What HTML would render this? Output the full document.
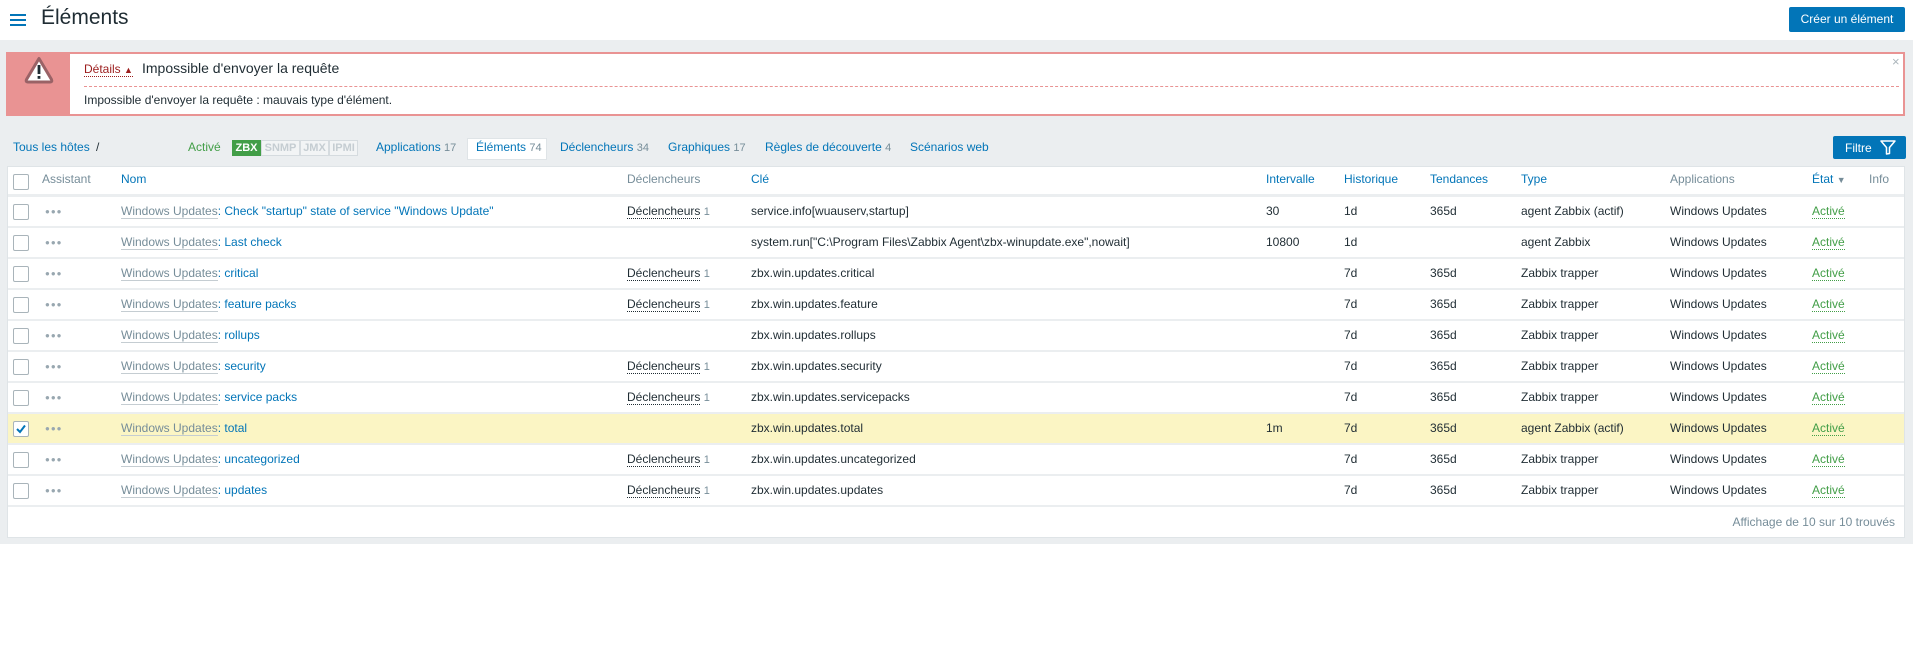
<!DOCTYPE html>
<html><head><meta charset="utf-8"><style>
*{box-sizing:border-box;margin:0;padding:0}
body{width:1913px;height:648px;background:#fff;font-family:"Liberation Sans",Arial,sans-serif;font-size:12px;color:#1f2c33;position:relative;overflow:hidden}
.abs{position:absolute;white-space:nowrap}
.hdr{position:absolute;left:0;top:0;width:1913px;height:40px;background:#fff}
.gray{position:absolute;left:0;top:40px;width:1913px;height:504px;background:#ebeef0}
.btn{position:absolute;background:#0275b8;color:#fff;border-radius:2px;text-align:center}
.lnk{color:#0275b8}
.msg{position:absolute;left:6px;top:52px;width:1899px;height:64px;background:#fff;border:2px solid #e99393}
.msg .red{position:absolute;left:0;top:0;width:62px;height:60px;background:#e99393}
.tbl{position:absolute;left:7px;top:166px;width:1898px;height:372px;background:#fff;border:1px solid #dfe4e7}
.row{position:absolute;left:0;width:1896px;height:31px;border-bottom:2px solid #ebeef0}
.row>span{position:absolute;top:7px;white-space:nowrap}
.cb{position:absolute;left:5px;top:7px;width:16px;height:16px;border:1px solid #a9b4ba;border-radius:2px;background:#fff}
.row>span.dots{color:#98a7b0;font-size:8px;letter-spacing:1px;top:10px}
.g{color:#768d99;border-bottom:1px solid #c5cdd2}
.dec{border-bottom:1px dotted #1f2c33}
.cnt{color:#768d99;font-size:11px}
.act{color:#429e47;border-bottom:1px dotted #429e47}
.th{color:#0275b8}
.tag{position:absolute;top:140px;height:16px;font-size:11px;font-weight:bold;line-height:14px;text-align:center;border:1px solid #d5dbdf;color:#c5cdd2;background:#f2f4f5}
</style></head><body>
<div class="hdr">
 <div class="abs" style="left:10px;top:14px;width:16px;height:2px;background:#0275b8;box-shadow:0 5px 0 #0275b8,0 10px 0 #0275b8"></div>
 <div class="abs" style="left:41px;top:6px;font-size:21px;color:#1f2c33">Éléments</div>
 <div class="btn" style="left:1789px;top:7px;width:116px;height:25px;line-height:25px;font-size:12px">Créer un élément</div>
</div>
<div class="gray"></div>
<div class="msg">
 <div class="red"><svg width="62" height="60" style="position:absolute;left:0;top:0"><path d="M31 4.5 L43.5 25.5 Q44.5 28 42 28 L20 28 Q17.5 28 18.5 25.5 Z" fill="#fff" stroke="#9a6266" stroke-width="3" stroke-linejoin="round"/><rect x="29.6" y="11" width="2.8" height="9" fill="#1f2c33"/><rect x="29.6" y="22" width="2.8" height="2.8" fill="#1f2c33"/></svg></div>
 <div class="abs" style="left:76px;top:8px;color:#9b1c1c;font-size:12px;border-bottom:1px dotted #9b1c1c">Détails <span style="font-size:9px">▲</span></div>
 <div class="abs" style="left:134px;top:6px;font-size:14px">Impossible d'envoyer la requête</div>
 <div class="abs" style="left:76px;top:32px;width:1815px;border-top:1px dashed #e99393"></div>
 <div class="abs" style="left:76px;top:39px;font-size:12px">Impossible d'envoyer la requête : mauvais type d'élément.</div>
 <div class="abs" style="left:1884px;top:0px;color:#acb6bc;font-size:13px">×</div>
</div>
<div class="abs lnk" style="left:13px;top:140px">Tous les hôtes</div>
<div class="abs" style="left:96px;top:140px">/</div>
<div class="abs" style="left:188px;top:140px;color:#429e47">Activé</div>
<div class="tag" style="left:232px;width:29px;background:#429e47;color:#fff;border-color:#429e47">ZBX</div>
<div class="tag" style="left:261px;width:39px">SNMP</div>
<div class="tag" style="left:300px;width:29px">JMX</div>
<div class="tag" style="left:329px;width:29px">IPMI</div>
<div class="abs lnk" style="left:376px;top:140px">Applications <span class="cnt">17</span></div>
<div class="abs" style="left:467px;top:138px;width:80px;height:22px;background:#fff;border:1px solid #dfe4e7"></div>
<div class="abs lnk" style="left:476px;top:140px">Éléments <span class="cnt">74</span></div>
<div class="abs lnk" style="left:560px;top:140px">Déclencheurs <span class="cnt">34</span></div>
<div class="abs lnk" style="left:668px;top:140px">Graphiques <span class="cnt">17</span></div>
<div class="abs lnk" style="left:765px;top:140px">Règles de découverte <span class="cnt">4</span></div>
<div class="abs lnk" style="left:910px;top:140px">Scénarios web</div>
<div class="btn" style="left:1833px;top:136px;width:73px;height:23px">
 <span class="abs" style="left:12px;top:5px;font-size:12px">Filtre</span>
 <svg class="abs" style="left:47px;top:4px" width="16" height="15"><path d="M1 1 H15 L9.5 7.5 V13.5 L6.5 14 V7.5 Z" fill="none" stroke="#fff" stroke-width="1.5" stroke-linejoin="round"/></svg>
</div>
<div class="tbl">
 <div class="row" style="top:0;height:30px;border-bottom:3px solid #ebeef0">
  <div class="cb"></div>
  <span style="left:34px;color:#768d99;top:5px">Assistant</span>
  <span class="th" style="left:113px;top:5px">Nom</span>
  <span style="left:619px;color:#768d99;top:5px">Déclencheurs</span>
  <span class="th" style="left:743px;top:5px">Clé</span>
  <span class="th" style="left:1258px;top:5px">Intervalle</span>
  <span class="th" style="left:1336px;top:5px">Historique</span>
  <span class="th" style="left:1422px;top:5px">Tendances</span>
  <span class="th" style="left:1513px;top:5px">Type</span>
  <span style="left:1662px;color:#768d99;top:5px">Applications</span>
  <span class="th" style="left:1804px;top:5px">État <span style="font-size:9px;color:#768d99">▼</span></span>
  <span style="left:1861px;color:#768d99;top:5px">Info</span>
 </div>
 <div id="rows"></div>
 <div class="abs" style="right:9px;top:348px;color:#768d99;font-size:12px">Affichage de 10 sur 10 trouvés</div>
</div>
<script>
var d=[["Check \"startup\" state of service \"Windows Update\"",1,"service.info[wuauserv,startup]","30","1d","365d","agent Zabbix (actif)"],
["Last check",0,"system.run[\"C:\\Program Files\\Zabbix Agent\\zbx-winupdate.exe\",nowait]","10800","1d","","agent Zabbix"],
["critical",1,"zbx.win.updates.critical","","7d","365d","Zabbix trapper"],
["feature packs",1,"zbx.win.updates.feature","","7d","365d","Zabbix trapper"],
["rollups",0,"zbx.win.updates.rollups","","7d","365d","Zabbix trapper"],
["security",1,"zbx.win.updates.security","","7d","365d","Zabbix trapper"],
["service packs",1,"zbx.win.updates.servicepacks","","7d","365d","Zabbix trapper"],
["total",0,"zbx.win.updates.total","1m","7d","365d","agent Zabbix (actif)"],
["uncategorized",1,"zbx.win.updates.uncategorized","","7d","365d","Zabbix trapper"],
["updates",1,"zbx.win.updates.updates","","7d","365d","Zabbix trapper"]];
var h="";
d.forEach(function(r,i){
 var sel=i==7;
 h+='<div class="row" style="top:'+(30+i*31)+'px;'+(sel?'background:#fbf5c4;':'')+'">'
 +'<div class="cb">'+(sel?'<svg width="14" height="14" style="position:absolute;left:0;top:0"><path d="M3 7 L6 10 L11 3.5" fill="none" stroke="#0275b8" stroke-width="2"/></svg>':'')+'</div>'
 +'<span class="dots" style="left:37px">●●●</span>'
 +'<span style="left:113px"><span class="g">Windows Updates</span><span style="color:#0275b8">: '+r[0].replace(/"/g,'&quot;')+'</span></span>'
 +(r[1]?'<span style="left:619px"><span class="dec">Déclencheurs</span> <span class="cnt">1</span></span>':'')
 +'<span style="left:743px">'+r[2].replace(/"/g,'&quot;')+'</span>'
 +'<span style="left:1258px">'+r[3]+'</span>'
 +'<span style="left:1336px">'+r[4]+'</span>'
 +'<span style="left:1422px">'+r[5]+'</span>'
 +'<span style="left:1513px">'+r[6]+'</span>'
 +'<span style="left:1662px">Windows Updates</span>'
 +'<span style="left:1804px" class="act">Activé</span></div>';
});
document.getElementById("rows").innerHTML=h;
</script>
</body></html>
